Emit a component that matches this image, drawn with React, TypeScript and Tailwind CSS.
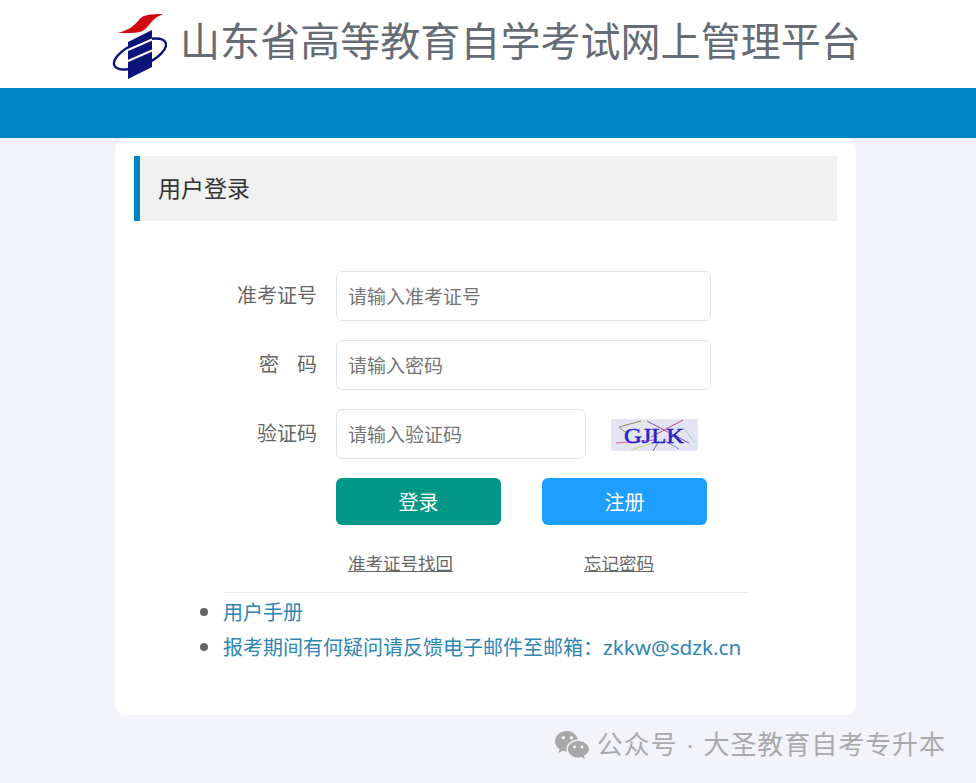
import React from "react";

const FONT = "font-['Liberation_Sans','Noto_Sans_CJK_SC',sans-serif]";

function Logo() {
  return (
    <svg width="56" height="70" viewBox="111 9 56 70" className="shrink-0">
      <path d="M117 33 C127 31 133 27 139 20 C142 16 146 14 163 14 C156 17 153 20 149 25 C145 30 142 33 130 33 Z" fill="#d2060f" />
      <ellipse cx="140" cy="54" rx="28" ry="11.5" transform="rotate(-24 140 54)" fill="none" stroke="#0b1478" strokeWidth="2.4" />
      <path d="M128 42 L152 30 L152 67 L128 79 Z" fill="#0b1478" />
      <path d="M128 50 L152 39.5 M128 61 L152 50.5" stroke="#fff" strokeWidth="2" />
    </svg>
  );
}

function Captcha() {
  return (
    <svg width="87" height="32" viewBox="0 0 87 32" className="shrink-0 bg-[#e4e4f2]">
      <path d="M8 8 L30 2 M8 8 L14 13" stroke="#8a8a60" strokeWidth="1" fill="none" />
      <path d="M36 2 L78 24" stroke="#8a50a0" strokeWidth="1" />
      <path d="M40 18 L72 1" stroke="#c040a0" strokeWidth="1" />
      <path d="M72 8 L84 24" stroke="#90e0b0" strokeWidth="1" />
      <path d="M5 24 L44 21" stroke="#d060c0" strokeWidth="1" />
      <path d="M20 31 L42 24" stroke="#c0e080" strokeWidth="1" />
      <path d="M54 22 L68 30" stroke="#7090d0" strokeWidth="1" />
      <path d="M42 32 L48 22" stroke="#6070a0" strokeWidth="1" />
      <text x="13" y="23.5" fontFamily="Liberation Serif, serif" fontSize="22" fill="#2424c4" stroke="#2424c4" strokeWidth="0.5" textLength="60" lengthAdjust="spacingAndGlyphs">GJLK</text>
    </svg>
  );
}

function WeChat() {
  return (
    <svg width="36" height="30" viewBox="0 0 36 30" className="shrink-0">
      <path d="M13.5 1 C6.5 1 1 5.6 1 11.3 C1 14.6 2.8 17.4 5.6 19.3 L4.4 23 L8.6 20.8 C10 21.3 11.5 21.6 13 21.6 C12.7 20.6 12.6 19.8 12.6 19 C12.6 13.6 17.6 9.6 23.8 9.4 C22.6 4.6 18.4 1 13.5 1 Z" fill="#a8a8a8" />
      <circle cx="9.2" cy="7.8" r="1.7" fill="#f3f4f9" />
      <circle cx="17.5" cy="7.8" r="1.7" fill="#f3f4f9" />
      <path d="M24 11 C18 11 14 14.8 14 19.3 C14 23.8 18.4 27.6 24 27.6 C25.2 27.6 26.4 27.4 27.4 27 L31 29 L30 25.8 C33 24 35 21.8 35 19.3 C35 14.8 30 11 24 11 Z" fill="#a8a8a8" />
      <circle cx="20.5" cy="17" r="1.4" fill="#f3f4f9" />
      <circle cx="28" cy="17" r="1.4" fill="#f3f4f9" />
    </svg>
  );
}

function Field({ label, placeholder, width, children }: { label: React.ReactNode; placeholder: string; width: string; children?: React.ReactNode }) {
  return (
    <div className="flex items-center">
      <label className="w-[183px] text-right text-[20px] text-[#666] shrink-0">{label}</label>
      <input
        placeholder={placeholder}
        className={`ml-[19px] h-[50px] ${width} rounded-[6px] border border-[#e2e4e8] bg-white pl-[11px] pr-[12px] pt-[3px] text-[19px] outline-none placeholder:text-[#757575]`}
      />
      {children}
    </div>
  );
}

export default function App() {
  return (
    <div className={`min-h-[783px] bg-[#f3f4f9] ${FONT} overflow-hidden`}>
      <header className="h-[88px] bg-white flex items-center pl-[111px]">
        <Logo />
        <h1 className="ml-[13px] pb-[4px] text-[40px] leading-none font-normal text-[#666c75] tracking-[0.05px] whitespace-nowrap">山东省高等教育自学考试网上管理平台</h1>
      </header>
      <div className="h-[50px] bg-[#0086c3]" />
      <main className="ml-[115px] w-[741px] h-[577px] bg-white rounded-[12px] px-[19px] pt-[18px]">
        <div className="h-[65px] bg-[#f1f1f1] border-l-[6px] border-[#0086c3] flex items-center pl-[18px] pt-[2px] text-[23px] text-[#333]">
          用户登录
        </div>
        <form className="mt-[50px] flex flex-col gap-[19px]">
          <Field label="准考证号" placeholder="请输入准考证号" width="w-[375px]" />
          <Field label={<>密<span className="inline-block w-[18px]" />码</>} placeholder="请输入密码" width="w-[375px]" />
          <Field label="验证码" placeholder="请输入验证码" width="w-[250px]">
            <span className="ml-[25px] pt-[2px]"><Captcha /></span>
          </Field>
        </form>
        <div className="ml-[202px] mt-[19px] flex gap-[41px]">
          <button className="w-[165px] h-[47px] pt-[2px] rounded-[6px] bg-[#009688] text-white text-[20px]">登录</button>
          <button className="w-[165px] h-[47px] pt-[2px] rounded-[6px] bg-[#1e9fff] text-white text-[20px]">注册</button>
        </div>
        <div className="mt-[27px] h-[24px] text-[17.5px] text-[#666] leading-[24px] flex">
          <a className="ml-[214px] underline">准考证号找回</a>
          <a className="ml-[131px] underline">忘记密码</a>
        </div>
        <hr className="ml-[89px] mt-[16px] w-[525px] border-[#eeeeee]" />
        <ul className="ml-[89px] -mt-[1px] list-disc text-[20px] text-[#2f86b4] marker:text-[#666] marker:text-[26px]">
          <li className="h-[36px] leading-[38px]"><a>用户手册</a></li>
          <li className="h-[36px] leading-[36px]"><a>报考期间有何疑问请反馈电子邮件至邮箱：<span className="font-['Noto_Sans',sans-serif] text-[20.7px]">zkkw@sdzk.cn</span></a></li>
        </ul>
      </main>
      <div className="mt-[15px] mr-[30px] flex items-center justify-end text-[26px] leading-[30px] tracking-[0.95px] text-[#aaaaaa]">
        <WeChat />
        <span className="ml-[7px]">公众号 · 大圣教育自考专升本</span>
      </div>
    </div>
  );
}
